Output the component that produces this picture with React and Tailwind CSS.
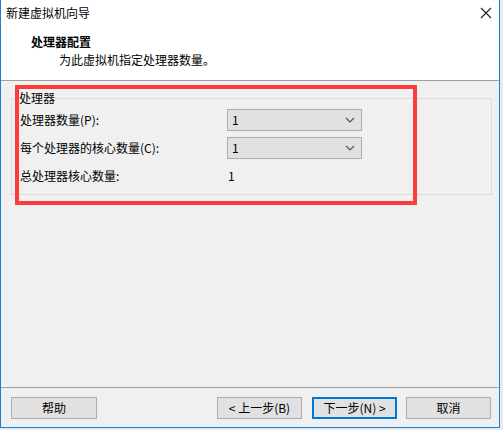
import React from "react";

const font = { fontFamily: '"Noto Sans CJK SC", "Microsoft YaHei", sans-serif' };

function Chevron() {
  return (
    <svg width="10" height="6" viewBox="0 0 10 6" className="block">
      <path d="M1 1 L5 5 L9 1" fill="none" stroke="#555" strokeWidth="1.2" />
    </svg>
  );
}

function Select({ value }) {
  return (
    <div className="flex h-[22px] w-[135px] items-center justify-between border border-[#adadad] bg-[#e1e1e1] pl-[4px] pr-[6px]">
      <span className="text-[12px] leading-[16px] text-black">{value}</span>
      <Chevron />
    </div>
  );
}

function Btn({ children, primary, className = "" }) {
  return (
    <div
      className={
        "flex h-[22px] w-[85px] items-center justify-center bg-[#e1e1e1] text-[12px] leading-[16px] text-black " +
        (primary ? "border-2 border-[#0078d7] " : "border border-[#adadad] ") +
        className
      }
    >
      {children}
    </div>
  );
}

export default function App() {
  return (
    <div className="relative h-[430px] w-[503px] bg-[#eaeaea]" style={font}>
      <div className="flex h-[428px] w-[500px] flex-col border-x border-b border-[#1a7fd6] bg-[#f0f0f0]">
        {/* title + header (white) */}
        <div className="flex h-[80px] flex-col bg-white">
          <div className="flex h-[26px] items-center justify-between pl-[5px] pr-[8px]">
            <span className="text-[12px] leading-[16px] text-black">新建虚拟机向导</span>
            <svg width="12" height="12" viewBox="0 0 12 12" className="mr-[-1px]">
              <path d="M1 1 L11 11 M11 1 L1 11" stroke="#222" strokeWidth="1.1" />
            </svg>
          </div>
          <div className="pl-[30px] pt-[8px] text-[12px] font-bold leading-[16px] text-black">处理器配置</div>
          <div className="mt-[2px] pl-[58px] text-[12px] leading-[16px] text-black">为此虚拟机指定处理器数量。</div>
        </div>
        <div className="h-px bg-[#a0a0a0]" />
        {/* body */}
        <div className="flex-1 px-[10px] pt-[9px]">
          <fieldset className="w-[481px] border border-[#dcdcdc] px-[8px] pb-[10px]">
            <legend className="ml-[-1px] px-0 text-[12px] leading-[16px] text-black">处理器</legend>
            <div className="mt-[3px] flex flex-col">
              <div className="flex h-[22px] items-center">
                <span className="w-[207px] text-[12px] leading-[16px] text-black">处理器数量(P):</span>
                <Select value="1" />
              </div>
              <div className="mt-[6px] flex h-[22px] items-center">
                <span className="w-[207px] text-[12px] leading-[16px] text-black">每个处理器的核心数量(C):</span>
                <Select value="1" />
              </div>
              <div className="mt-[9px] flex h-[16px] items-center">
                <span className="w-[208px] text-[12px] leading-[16px] text-black">总处理器核心数量:</span>
                <span className="text-[12px] leading-[16px] text-black">1</span>
              </div>
            </div>
          </fieldset>
        </div>
        {/* footer */}
        <div className="h-px bg-[#a0a0a0]" />
        <div className="flex items-center pb-[8px] pl-[10px] pr-[8px] pt-[9px]">
          <Btn className="w-[86px]">帮助</Btn>
          <div className="flex-1" />
          <Btn>&lt; 上一步(B)</Btn>
          <Btn primary className="ml-[10px]">下一步(N) &gt;</Btn>
          <Btn className="ml-[9px]">取消</Btn>
        </div>
      </div>
      {/* red annotation rectangle */}
      <div className="absolute left-[15px] top-[85px] h-[120px] w-[402px] border-4 border-[#fc3c3c]" />
    </div>
  );
}
